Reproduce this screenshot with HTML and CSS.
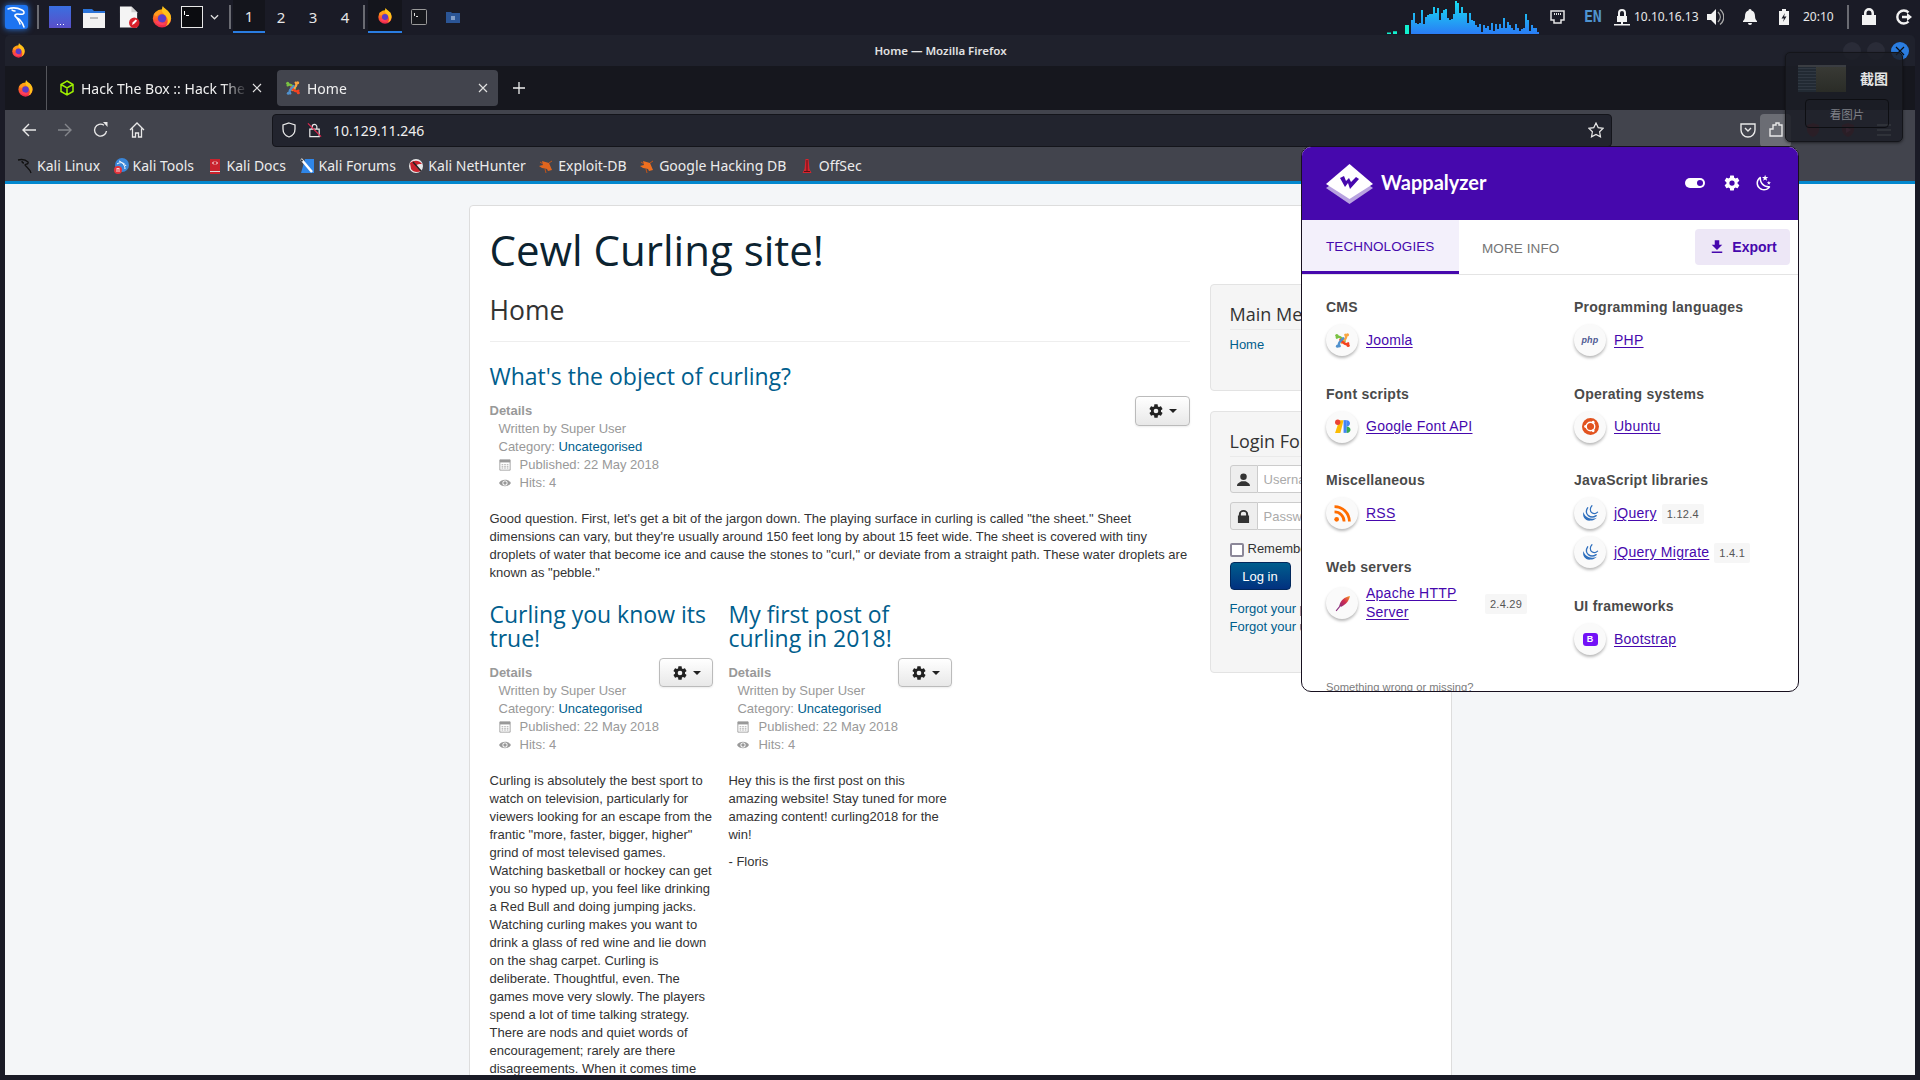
FILE: index.html
```html
<!DOCTYPE html>
<html lang="en">
<head>
<meta charset="utf-8">
<title>Home — Mozilla Firefox</title>
<link rel="stylesheet" href="styles.css">
</head>
<body>
<svg class="defs" aria-hidden="true">
  <defs>
    <linearGradient id="gFox" x1="0" y1="0" x2="0" y2="1"><stop offset="0" stop-color="#ffb400"/><stop offset=".55" stop-color="#ff5a2c"/><stop offset="1" stop-color="#e8234f"/></linearGradient>
    <linearGradient id="gGraph" gradientUnits="userSpaceOnUse" x1="0" y1="2" x2="0" y2="34"><stop offset="0" stop-color="#17dcf2"/><stop offset="1" stop-color="#2a7cf5"/></linearGradient>
    <symbol id="fox" viewBox="0 0 24 24">
      <circle cx="12" cy="13.500" r="10" fill="url(#gFox)"/>
      <path d="M13 0c1 3 6 4 8 9 2 5 0 11-5 13 3-3 3-8 0-11-1-2-4-3-4-6 0-1 0-4 1-5z" fill="#ffc21a"/>
      <circle cx="12" cy="13.500" r="4.600" fill="#5b3cc9"/>
      <path d="M3 9c2-3 6-4 9-3-1 3-4 2-5 5-2 0-3-1-4-2z" fill="#ff9a1f"/>
      <path d="M4 17c3 4 9 5 13 2-4 0-7-1-9-3z" fill="#ff3f5f"/>
    </symbol>
    <symbol id="gear" viewBox="0 0 24 24"><path d="M12 15.5A3.5 3.5 0 0 1 8.5 12 3.5 3.5 0 0 1 12 8.5a3.5 3.5 0 0 1 3.5 3.5 3.5 3.5 0 0 1-3.5 3.5m7.43-2.53c.04-.32.07-.64.07-.97 0-.33-.03-.66-.07-1l2.11-1.63c.19-.15.24-.42.12-.64l-2-3.46c-.12-.22-.39-.31-.61-.22l-2.49 1c-.52-.39-1.06-.73-1.69-.98l-.37-2.65A.506.506 0 0 0 14 2h-4c-.25 0-.46.18-.5.42l-.37 2.65c-.63.25-1.17.59-1.69.98l-2.49-1c-.22-.09-.49 0-.61.22l-2 3.46c-.13.22-.07.49.12.64L4.57 11c-.04.34-.07.67-.07 1 0 .33.03.65.07.97l-2.11 1.66c-.19.15-.25.42-.12.64l2 3.46c.12.22.39.3.61.22l2.49-1.01c.52.4 1.06.74 1.69.99l.37 2.65c.04.24.25.42.5.42h4c.25 0 .46-.18.5-.42l.37-2.65c.63-.26 1.17-.59 1.69-.99l2.49 1.01c.22.08.49 0 .61-.22l2-3.46c.12-.22.07-.49-.12-.64l-2.11-1.66Z" fill="currentColor"/></symbol>
    <symbol id="close" viewBox="0 0 12 12"><path d="M2 2l8 8M10 2l-8 8" stroke="currentColor" stroke-width="1.200" fill="none"/></symbol>
    <symbol id="joomla" viewBox="0 0 24 24" fill="none" stroke-width="3.400" stroke-linecap="round">
      <path d="M4 8c3-3 6 0 8 2l3 3" stroke="#7ac143"/>
      <path d="M16 4c3 3 0 6-2 8l-3 3" stroke="#f9a541"/>
      <path d="M20 16c-3 3-6 0-8-2l-3-3" stroke="#f44321"/>
      <path d="M8 20c-3-3 0-6 2-8l3-3" stroke="#5091cd"/>
      <circle cx="4" cy="5" r="2.300" fill="#7ac143" stroke="none"/>
      <circle cx="19" cy="4" r="2.300" fill="#f9a541" stroke="none"/>
      <circle cx="20" cy="19" r="2.300" fill="#f44321" stroke="none"/>
      <circle cx="5" cy="20" r="2.300" fill="#5091cd" stroke="none"/>
    </symbol>
    <symbol id="jq" viewBox="0 0 24 24" fill="none" stroke="#2f6fbd" stroke-linecap="round">
      <path d="M2 10c-2 7 3 13 10 12 3 0 6-1 9-4-5 2-10 2-14-1-3-2-4-4-5-7z" fill="#2f6fbd" stroke="none"/>
      <path d="M8 4c-3 4-2 9 1 11 4 3 8 2 11 0" stroke-width="1.900"/>
      <path d="M14 1c-3 3-3 8 0 10 3 2 6 1 8-1" stroke-width="1.700"/>
    </symbol>
    <symbol id="cal" viewBox="0 0 14 14"><path d="M1 1h12v12H1z" fill="none" stroke="#999" stroke-width="1"/><path d="M1 1h12v3H1z" fill="#999"/><path d="M3 6h2v1H3zM6 6h2v1H6zM9 6h2v1H9zM3 8h2v1H3zM6 8h2v1H6zM9 8h2v1H9zM3 10h2v1H3zM6 10h2v1H6zM9 10h2v1H9z" fill="#aaa"/></symbol>
    <symbol id="eye" viewBox="0 0 14 10"><path d="M0 5c3-5 11-5 14 0-3 5-11 5-14 0z" fill="#999"/><circle cx="7" cy="5" r="3" fill="#fff"/><circle cx="7" cy="5" r="2" fill="#999"/></symbol>
    <symbol id="caret" viewBox="0 0 8 4"><path d="M0 0h8L4 4z" fill="currentColor"/></symbol>
  </defs>
</svg>

<header class="panel">
  <div class="launchers">
    <svg class="kali-logo" viewBox="0 0 25 28"><rect x="1" y="2" width="23" height="24" rx="3" fill="#1d74f0"/><path d="M4 6c5-2 10-1 14 1 2 1 3 3 1 4-3 1-6-1-8 1-1 2 3 3 5 5 2 2 3 4 4 7M11 12c1 3 4 5 5 9M8 7c1 1 2 1 3 1" fill="none" stroke="#fff" stroke-width="1.500" stroke-linecap="round"/></svg>
    <span class="sep"></span>
    <svg class="launch launch-a" viewBox="0 0 22 22"><defs><linearGradient id="gDesk" x1="0" y1="0" x2="0" y2="1"><stop offset="0" stop-color="#3a6fe0"/><stop offset="1" stop-color="#5a4fc8"/></linearGradient></defs><rect width="22" height="22" fill="url(#gDesk)"/><path d="M8 18h1v1H8zM11 18h1v1h-1zM14 18h1v1h-1z" fill="#fff"/></svg>
    <svg class="launch launch-b" viewBox="0 0 22 22"><path d="M0 3h9l2 2h11v17H0z" fill="#2a73d8"/><path d="M0 7h22v15H0z" fill="#f2f2f2"/><rect x="7" y="11" width="8" height="2" fill="#bbb"/></svg>
    <svg class="launch launch-c" viewBox="0 0 22 22"><path d="M1 0h12l6 6v16H1z" fill="#f4f4f4"/><path d="M13 0l6 6h-6z" fill="#cfcfcf"/><circle cx="16" cy="17" r="5.500" fill="#d9202a"/><path d="M13.500 19.500l1-3 3-3 1.500 1.500-3 3z" fill="#fff"/></svg>
    <svg class="launch launch-d"><use href="#fox"/></svg>
    <svg class="launch launch-e" viewBox="0 0 22 22"><rect x=".5" y=".5" width="21" height="21" fill="#0b0c10" stroke="#e8e8e8"/><path d="M3 5h1v4H3zM5 9h3v1H5z" fill="#fff"/></svg>
    <svg class="chev" viewBox="0 0 10 6"><path d="M1 1l4 4 4-4" fill="none" stroke="#ddd" stroke-width="1.400"/></svg>
    <span class="sep sep-b"></span>
  </div>
  <nav class="spaces">
    <span class="space on">1</span><span class="space">2</span><span class="space">3</span><span class="space">4</span>
  </nav>
  <span class="sep sep-c"></span>
  <div class="tasks">
    <span class="task on"><svg class="task-ic"><use href="#fox"/></svg></span>
    <span class="task"><svg class="task-ic" viewBox="0 0 16 16"><rect x=".5" y=".5" width="15" height="15" rx="1" fill="#16171c" stroke="#9a9a9a"/><path d="M3 4h1v3H3zM5 7h2v1H5z" fill="#ddd"/></svg></span>
    <span class="task"><svg class="task-ic" viewBox="0 0 16 16"><path d="M1 3h5l1 1h8v10H1z" fill="#2b5595"/><rect x="6" y="7" width="4" height="4" fill="#a9bedd" opacity=".7"/></svg></span>
  </div>
  <div class="tray">
    <svg class="graph" viewBox="0 0 152 35"><path d="M0 34v-1.400h4V34zM6 34v-2.700h4V34zM18 34v-9h4v9z" fill="#12f0cf"/><path d="M24 34V20h2V13h2V23h2V24h2V23h2V10h2V24h2V17h2V15h2V14h2V14h2V7h2V13h2V8h2V20h2V13h2V10h2V9h2V18h2V20h2V19h2V14h2V1h2V3h2V13h2V7h2V13h2V13h2V23h2V13h2V20h2V21h2V25h2V27h2V24h2V32h2V25h2V28h2V26h2V30h2V23h2V31h2V24h2V29h2V24h2V28h2V18h2V28h2V22h2V25h2V28h2V30h2V24h2V28h2V31h2V29h2V28h2V14h2V20h2V31h2V25h2V28h2V28h2V32h2V34z" fill="url(#gGraph)"/></svg>
    <svg class="tray-net" viewBox="0 0 15 14"><path d="M1 1h13v9h-3v3H4v-3H1z" fill="none" stroke="#e4e4e4" stroke-width="1.500"/><path d="M4 3h1v2H4zM6 3h1v2H6zM8 3h1v2H8zM10 3h1v2h-1z" fill="#e4e4e4"/></svg>
    <span class="tray-en">EN</span>
    <svg class="tray-user" viewBox="0 0 16 18"><path d="M4 8V5a4 4 0 0 1 8 0v3h1v6H3V8zm2 0h4V5a2 2 0 0 0-4 0z" fill="#f2f2f2"/><path d="M7 14h2v2h7v1.500H0V16h7z" fill="#f2f2f2"/></svg>
    <span class="tray-text tray-ip">10.10.16.13</span>
    <svg class="tray-vol" viewBox="0 0 17 18"><path d="M0 6h4l5-5v16l-5-5H0z" fill="#f2f2f2"/><path d="M11 4c3 3 3 7 0 10M13 1.500c5 4 5 11 0 15" fill="none" stroke="#aaa" stroke-width="1.300"/></svg>
    <svg class="tray-bell" viewBox="0 0 14 16"><path d="M7 0c1 0 1.500.8 1.500 1.500 2.500.7 3.500 3 3.500 5.500 0 3 1 4 2 5v1H0v-1c1-1 2-2 2-5 0-2.500 1-4.800 3.500-5.500C5.500.8 6 0 7 0zM5 14h4a2 2 0 0 1-4 0z" fill="#f2f2f2"/></svg>
    <svg class="tray-bat" viewBox="0 0 10 16"><path d="M3 0h4v2h3v14H0V2h3z" fill="#f2f2f2"/><path d="M6 4L2.500 9.500H5L4 13l3.500-5.500H5z" fill="#1a1b26"/></svg>
    <span class="tray-text tray-time">20:10</span>
    <span class="sep sep-d"></span>
    <svg class="tray-lock" viewBox="0 0 14 17"><path d="M2 7V5a5 5 0 0 1 10 0v2h2v10H0V7zm2.500 0h5V5a2.500 2.500 0 0 0-5 0z" fill="#f2f2f2"/></svg>
    <svg class="tray-out" viewBox="0 0 16 16"><path d="M12.500 3.500A6.500 6.500 0 1 0 12.500 12.500" fill="none" stroke="#f2f2f2" stroke-width="2.400"/><path d="M6 6.800h5V4l5 4-5 4V9.200H6z" fill="#f2f2f2"/></svg>
  </div>
</header>

<div class="window">
  <div class="titlebar">
    <svg class="title-ic"><use href="#fox"/></svg>
    <span class="title-text">Home — Mozilla Firefox</span>
    <div class="win-btns"><span class="win-btn"></span><span class="win-btn"></span><span class="win-btn win-close"><svg class="win-x"><use href="#close"/></svg></span></div>
  </div>

  <div class="tabbar">
    <span class="ff-slot"><svg class="ff-menu"><use href="#fox"/></svg></span>
    <div class="tab">
      <svg class="tab-ic" viewBox="0 0 16 16"><path d="M8 1l6 3.500v7L8 15l-6-3.500v-7z M2 4.500L8 8l6-3.500M8 8v7" fill="none" stroke="#9fef00" stroke-width="1.500"/></svg>
      <span class="tab-label">Hack The Box :: Hack The Box</span>
      <svg class="tab-x"><use href="#close"/></svg>
    </div>
    <div class="tab tab-on">
      <svg class="tab-ic"><use href="#joomla"/></svg>
      <span class="tab-label">Home</span>
      <svg class="tab-x"><use href="#close"/></svg>
    </div>
    <svg class="tab-new" viewBox="0 0 12 12"><path d="M6 0v12M0 6h12" stroke="#eee" stroke-width="1.300"/></svg>
  </div>

  <div class="navbar">
    <span class="nav-slot"><svg class="nav-ic" viewBox="0 0 16 16"><path d="M15 8H2M8 2L2 8l6 6" fill="none" stroke="#e8e8e8" stroke-width="1.400"/></svg></span>
    <span class="nav-slot"><svg class="nav-ic" viewBox="0 0 16 16"><path d="M1 8h13M8 2l6 6-6 6" fill="none" stroke="#84868c" stroke-width="1.400"/></svg></span>
    <span class="nav-slot"><svg class="nav-ic" viewBox="0 0 16 16"><path d="M13.500 9A6 6 0 1 1 11 3.200" fill="none" stroke="#e8e8e8" stroke-width="1.400"/><path d="M10 0h4.500v5z" fill="#e8e8e8"/></svg></span>
    <span class="nav-slot"><svg class="nav-ic" viewBox="0 0 16 16"><path d="M1 8l7-7 7 7M3.500 6.500V15h3v-4h3v4h3V6.500" fill="none" stroke="#e8e8e8" stroke-width="1.300"/></svg></span>
    <div class="urlbar">
      <svg class="url-shield" viewBox="0 0 16 16"><path d="M8 1l6 2v4c0 4-3 7-6 8-3-1-6-4-6-8V3z" fill="none" stroke="#e8e8e8" stroke-width="1.300"/></svg>
      <svg class="url-lock" viewBox="0 0 16 16"><path d="M3 7h10v8H3zM5.500 7V4.500a2.500 2.500 0 0 1 5 0V7" fill="none" stroke="#e8e8e8" stroke-width="1.300"/><path d="M1 1l14 14" stroke="#e22850" stroke-width="1.300"/></svg>
      <span class="url-text">10.129.11.246</span>
      <svg class="url-star" viewBox="0 0 16 16"><path d="M8 1l2.200 4.600 5 .7-3.600 3.500.9 5L8 12.400l-4.500 2.400.9-5L.8 6.300l5-.7z" fill="none" stroke="#e8e8e8" stroke-width="1.200"/></svg>
    </div>
    <div class="nav-right">
      <svg class="nav-ic" viewBox="0 0 16 16"><path d="M1 2h14v6a7 7 0 0 1-14 0z" fill="none" stroke="#e8e8e8" stroke-width="1.400"/><path d="M5 6l3 3 3-3" fill="none" stroke="#e8e8e8" stroke-width="1.400"/></svg>
      <span class="puzzle"><svg class="nav-ic" viewBox="0 0 16 16"><path d="M2 7h3V3h3v-2h3v2h3v11H2z" fill="none" stroke="#e8e8e8" stroke-width="1.400"/></svg></span>
      <svg class="nav-ic ext-a" viewBox="0 0 16 16"><path d="M8 1l6 2v5c0 3-3 6-6 7-3-1-6-4-6-7V3z" fill="#7d2027"/></svg>
      <svg class="nav-ic ext-b" viewBox="0 0 16 16"><path d="M8 1l6 2v5c0 3-3 6-6 7-3-1-6-4-6-7V3z" fill="#7d2027"/><path d="M6 5l5 3-5 3z" fill="#b46"/></svg>
      <svg class="nav-ic ext-c" viewBox="0 0 16 16"><path d="M1 3h14M1 8h14M1 13h14" stroke="#c8c8c8" stroke-width="1.400"/></svg>
    </div>
  </div>

  <div class="bookmarks">
    <span class="bm"><svg class="bm-ic" viewBox="0 0 16 16"><path d="M1 2c4-1 8 0 10 2 1 2-2 2-3 3 1 2 5 4 6 8M5 3c0 1 1 2 2 2" fill="none" stroke="#111" stroke-width="1.300"/></svg>Kali Linux</span>
    <span class="bm"><svg class="bm-ic" viewBox="0 0 16 16"><circle cx="9" cy="7" r="7" fill="#3a86d8"/><path d="M4 6c3-2 7-2 9 2M6 3c3 1 6 4 6 8" stroke="#fff" fill="none"/><circle cx="5" cy="12" r="4" fill="#e5333a"/><path d="M3.500 10.500h3M4 11v3M6 11v3" stroke="#fff" stroke-width=".8"/></svg>Kali Tools</span>
    <span class="bm"><svg class="bm-ic" viewBox="0 0 16 16"><path d="M3 1h10v15H3z" fill="#c9232d"/><path d="M3 13h10v1H3z" fill="#ddd"/><path d="M5.500 5L7 3.500M5.500 5L7 6.500M10.500 5L9 3.500M10.500 5L9 6.500" stroke="#fff"/></svg>Kali Docs</span>
    <span class="bm"><svg class="bm-ic" viewBox="0 0 16 16"><path d="M6 1h9v14H2z" fill="#2f86e8"/><path d="M2 1l11 13" stroke="#fff" stroke-width="2.500"/><path d="M1 1l3 1-1 2z" fill="#222"/></svg>Kali Forums</span>
    <span class="bm"><svg class="bm-ic" viewBox="0 0 16 16"><circle cx="8" cy="8" r="7" fill="#e9e9e9"/><path d="M2 5c4-3 9-3 12 1-3 0-5 0-6 2 1 2 3 3 5 5-4 2-8 1-10-2z" fill="#c9232d"/><path d="M5 4l8 9" stroke="#222" stroke-width="1.500"/></svg>Kali NetHunter</span>
    <span class="bm"><svg class="bm-ic" viewBox="0 0 16 16"><path d="M4 3l7 2 3 7-4 1-1-2-5-1-3-2 4-1z" fill="#e0651e"/><path d="M2 4l3 2M7 11l1 4M11 5l3-2" stroke="#c2541a"/></svg>Exploit-DB</span>
    <span class="bm"><svg class="bm-ic" viewBox="0 0 16 16"><path d="M4 3l7 2 3 7-4 1-1-2-5-1-3-2 4-1z" fill="#ef6f1f"/><path d="M2 4l3 2M7 11l1 4M11 5l3-2" stroke="#c2541a"/></svg>Google Hacking DB</span>
    <span class="bm"><svg class="bm-ic" viewBox="0 0 16 16"><path d="M6.500 1h3l1 10 2 4h-9l2-4z" fill="#d8232d"/><path d="M7.500 2h1v12h-1zM5 13h6v1H5z" fill="#5e0f14"/></svg>OffSec</span>
  </div>

  <main class="page">
    <div class="site">
      <div class="brand">Cewl Curling site!</div>
      <div class="columns">
        <div class="content">
          <h1 class="page-title">Home</h1>
          <article class="lead">
            <h2 class="post-title">What's the object of curling?</h2>
            <button class="gear-btn"><svg class="gear-ic"><use href="#gear"/></svg><svg class="gear-caret"><use href="#caret"/></svg></button>
            <dl class="info">
              <dt>Details</dt>
              <dd>Written by Super User</dd>
              <dd>Category: <a href="#">Uncategorised</a></dd>
              <dd class="with-ic"><svg class="info-ic"><use href="#cal"/></svg>Published: 22 May 2018</dd>
              <dd class="with-ic"><svg class="info-ic"><use href="#eye"/></svg>Hits: 4</dd>
            </dl>
            <p class="body-text">Good question. First, let's get a bit of the jargon down. The playing surface in curling is called "the sheet." Sheet dimensions can vary, but they're usually around 150 feet long by about 15 feet wide. The sheet is covered with tiny droplets of water that become ice and cause the stones to "curl," or deviate from a straight path. These water droplets are known as "pebble."</p>
          </article>
          <div class="row">
            <article class="item">
              <h2 class="post-title">Curling you know its true!</h2>
              <button class="gear-btn"><svg class="gear-ic"><use href="#gear"/></svg><svg class="gear-caret"><use href="#caret"/></svg></button>
              <dl class="info">
                <dt>Details</dt>
                <dd>Written by Super User</dd>
                <dd>Category: <a href="#">Uncategorised</a></dd>
                <dd class="with-ic"><svg class="info-ic"><use href="#cal"/></svg>Published: 22 May 2018</dd>
                <dd class="with-ic"><svg class="info-ic"><use href="#eye"/></svg>Hits: 4</dd>
              </dl>
              <p class="body-text">Curling is absolutely the best sport to watch on television, particularly for viewers looking for an escape from the frantic "more, faster, bigger, higher" grind of most televised games. Watching basketball or hockey can get you so hyped up, you feel like drinking a Red Bull and doing jumping jacks. Watching curling makes you want to drink a glass of red wine and lie down on the shag carpet. Curling is deliberate. Thoughtful, even. The games move very slowly. The players spend a lot of time talking strategy. There are nods and quiet words of encouragement; rarely are there disagreements. When it comes time</p>
            </article>
            <article class="item">
              <h2 class="post-title">My first post of curling in 2018!</h2>
              <button class="gear-btn"><svg class="gear-ic"><use href="#gear"/></svg><svg class="gear-caret"><use href="#caret"/></svg></button>
              <dl class="info">
                <dt>Details</dt>
                <dd>Written by Super User</dd>
                <dd>Category: <a href="#">Uncategorised</a></dd>
                <dd class="with-ic"><svg class="info-ic"><use href="#cal"/></svg>Published: 22 May 2018</dd>
                <dd class="with-ic"><svg class="info-ic"><use href="#eye"/></svg>Hits: 4</dd>
              </dl>
              <p class="body-text">Hey this is the first post on this amazing website! Stay tuned for more amazing content! curling2018 for the win!</p>
              <p class="body-text sign">- Floris</p>
            </article>
          </div>
        </div>
        <aside class="sidebar">
          <section class="well well-menu">
            <h3 class="well-title">Main Menu</h3>
            <a class="well-link" href="#">Home</a>
          </section>
          <section class="well well-login">
            <h3 class="well-title">Login Form</h3>
            <div class="input-group"><span class="addon"><svg class="addon-ic" viewBox="0 0 14 14"><circle cx="7" cy="4" r="3.500" fill="#333"/><path d="M0 14c0-3 3-4 5-5h4c2 1 5 2 5 5z" fill="#333"/></svg></span><input class="field" placeholder="Username"></div>
            <div class="input-group"><span class="addon"><svg class="addon-ic" viewBox="0 0 14 14"><path d="M2 6V4.500a5 4.500 0 0 1 10 0V6h1v8H1V6zm2.200 0h5.600V4.500a2.800 2.500 0 0 0-5.600 0z" fill="#333"/></svg></span><input class="field" placeholder="Password"></div>
            <label class="remember"><input class="check" type="checkbox">Remember Me</label>
            <button class="login-btn">Log in</button>
            <a class="forgot" href="#">Forgot your password?</a>
            <a class="forgot" href="#">Forgot your username?</a>
          </section>
        </aside>
      </div>
    </div>
  </main>
</div>

<section class="wapp">
  <div class="wapp-head">
    <svg class="wapp-logo" viewBox="0 0 47 40"><path d="M0 24L23.500 8 47 24 23.500 40z" fill="#b8a3e0"/><path d="M0 20L23.500 0 47 20 23.500 35z" fill="#fff"/><path d="M14 14l5 9 3-4 2 6 9-10-3-2-5 5-2-4-3 3-2-5z" fill="#4608ad"/></svg>
    <span class="wapp-name">Wappalyzer</span>
    <div class="wapp-actions">
      <svg class="wapp-toggle" viewBox="0 0 20 10"><rect width="20" height="10" rx="5" fill="#fff"/><circle cx="15" cy="5" r="3" fill="#4608ad"/></svg>
      <svg class="wapp-ic"><use href="#gear"/></svg>
      <svg class="wapp-ic wapp-moon" viewBox="0 0 24 24"><path fill="currentColor" d="M17.750,4.090L15.220,6.030L16.130,9.090L13.500,7.280L10.870,9.090L11.780,6.030L9.250,4.090L12.440,4L13.500,1L14.560,4L17.750,4.090M21.250,11L19.610,12.250L20.200,14.230L18.500,13.060L16.800,14.230L17.390,12.250L15.750,11L17.810,10.950L18.500,9L19.190,10.950L21.250,11M18.970,15.950C19.800,15.870 20.690,17.050 20.160,17.800C19.840,18.250 19.500,18.670 19.080,19.070C15.170,23 8.840,23 4.940,19.070C1.030,15.170 1.030,8.830 4.940,4.930C5.340,4.530 5.760,4.170 6.210,3.850C6.960,3.320 8.140,4.210 8.060,5.040C7.790,7.900 8.750,10.870 10.950,13.060C13.140,15.260 16.100,16.220 18.970,15.950M17.330,17.970C14.500,17.810 11.700,16.640 9.530,14.500C7.360,12.310 6.200,9.500 6.040,6.680C3.230,9.820 3.340,14.640 6.350,17.660C9.370,20.670 14.190,20.780 17.330,17.970Z"/></svg>
    </div>
  </div>
  <div class="wapp-tabs">
    <span class="wapp-tab wapp-tab-on">Technologies</span>
    <span class="wapp-tab">More info</span>
    <span class="wapp-export"><svg class="export-ic" viewBox="0 0 24 24"><path d="M5,20H19V18H5M19,9H15V3H9V9H5L12,16L19,9Z" fill="currentColor"/></svg>Export</span>
  </div>
  <div class="wapp-body">
    <div class="wapp-col">
      <div class="cat">
        <h4 class="cat-title">CMS</h4>
        <div class="tech"><span class="tech-ic"><svg class="tech-svg"><use href="#joomla"/></svg></span><a class="tech-link" href="#">Joomla</a></div>
      </div>
      <div class="cat">
        <h4 class="cat-title">Font scripts</h4>
        <div class="tech"><span class="tech-ic"><svg class="tech-svg" viewBox="0 0 16 16"><path d="M5 2l4 0-3 12H1z" fill="#fbbc04"/><circle cx="3.500" cy="4" r="2.500" fill="#ea4335"/><path d="M9 2h3v12H9z" fill="#4285f4"/><path d="M12 2c2 0 3 1.500 3 3s-1 3-3 3z" fill="#4285f4"/><path d="M12 8c2 0 3.500 1.500 3.500 3S14 14 12 14z" fill="#34a853"/></svg></span><a class="tech-link" href="#">Google Font API</a></div>
      </div>
      <div class="cat">
        <h4 class="cat-title">Miscellaneous</h4>
        <div class="tech"><span class="tech-ic"><svg class="tech-svg" viewBox="0 0 16 16"><circle cx="2.500" cy="13.500" r="2.200" fill="#ff6d00"/><path d="M.5 6.500a9 9 0 0 1 9 9M.5 1.500a14 14 0 0 1 14 14" fill="none" stroke="#ff6d00" stroke-width="2.600"/></svg></span><a class="tech-link" href="#">RSS</a></div>
      </div>
      <div class="cat">
        <h4 class="cat-title">Web servers</h4>
        <div class="tech"><span class="tech-ic"><svg class="tech-svg" viewBox="0 0 16 16"><defs><linearGradient id="gFeather" x1="1" y1="0" x2="0" y2="1"><stop offset="0" stop-color="#f69923"/><stop offset=".5" stop-color="#d22d4f"/><stop offset="1" stop-color="#8a2a7c"/></linearGradient></defs><path d="M15 1c-5 1-9 4-10 9l2 1c4-2 7-5 8-10z" fill="url(#gFeather)"/><path d="M6 10l-4 5" stroke="#8a2a7c" fill="none"/></svg></span><a class="tech-link tech-wrap" href="#">Apache HTTP Server</a><span class="chip">2.4.29</span></div>
      </div>
    </div>
    <div class="wapp-col">
      <div class="cat">
        <h4 class="cat-title">Programming languages</h4>
        <div class="tech"><span class="tech-ic"><span class="php">php</span></span><a class="tech-link" href="#">PHP</a></div>
      </div>
      <div class="cat">
        <h4 class="cat-title">Operating systems</h4>
        <div class="tech"><span class="tech-ic"><svg class="tech-svg" viewBox="0 0 16 16"><circle cx="8" cy="8" r="8" fill="#e2531f"/><circle cx="8" cy="8" r="4" fill="none" stroke="#fff" stroke-width="1.300"/><circle cx="3.300" cy="8" r="1.300" fill="#fff"/><circle cx="10.500" cy="4" r="1.300" fill="#fff"/><circle cx="10.500" cy="12" r="1.300" fill="#fff"/></svg></span><a class="tech-link" href="#">Ubuntu</a></div>
      </div>
      <div class="cat">
        <h4 class="cat-title">JavaScript libraries</h4>
        <div class="tech"><span class="tech-ic"><svg class="tech-svg"><use href="#jq"/></svg></span><a class="tech-link" href="#">jQuery</a><span class="chip">1.12.4</span></div>
        <div class="tech"><span class="tech-ic"><svg class="tech-svg"><use href="#jq"/></svg></span><a class="tech-link" href="#">jQuery Migrate</a><span class="chip">1.4.1</span></div>
      </div>
      <div class="cat">
        <h4 class="cat-title">UI frameworks</h4>
        <div class="tech"><span class="tech-ic"><span class="bs">B</span></span><a class="tech-link" href="#">Bootstrap</a></div>
      </div>
    </div>
  </div>
  <div class="wapp-foot">Something wrong or missing?</div>
</section>

<aside class="shot-tip">
  <div class="tip-top"><span class="tip-thumb"></span><span class="tip-title">截图</span></div>
  <span class="tip-btn">看图片</span>
</aside>
</body>
</html>
```

FILE: styles.css
```css
* { box-sizing: border-box; }
html, body { height: 100%; }
body {
  margin: 0;
  width: 1920px;
  height: 1080px;
  overflow: hidden;
  display: flex;
  flex-direction: column;
  background: #1a1b26;
  font-family: "Liberation Sans", Arial, sans-serif;
  font-size: 13px;
  color: #333;
  position: relative;
}
svg { display: block; flex: none; }
.defs { width: 0; height: 0; overflow: hidden; position: absolute; }

/* ---------- desktop panel ---------- */
.panel { height: 35px; flex: none; display: flex; align-items: stretch; background: #1a1b26; color: #f0f0f0; font-family: "Noto Sans", sans-serif; padding-bottom: 2px; }
.launchers { display: flex; align-items: center; padding-left: 4px; }
.kali-logo { width: 25px; height: 28px; filter: drop-shadow(0 0 3px #2b7df0); }
.sep { width: 2px; height: 24px; background: #6a6b72; flex: none; align-self: center; }
.launchers > .sep:nth-of-type(1) { margin-left: 8px; }
.launch { width: 22px; height: 22px; }
.launch-a { margin-left: 10px; }
.launch-b { margin-left: 12px; }
.launch-c { margin-left: 14px; width: 21px; }
.launch-d { margin-left: 11px; width: 22px; }
.launch-e { margin-left: 8px; }
.chev { width: 9px; height: 6px; margin-left: 7px; }
.launchers > .sep-b { margin-left: 10px; }
.spaces { display: flex; margin-left: 2px; }
.space { width: 32px; display: flex; align-items: center; justify-content: center; font-size: 15px; color: #e6e6e6; }
.space.on { background: #14151c; border-bottom: 2px solid #2a7de1; }
.sep-c { margin-left: 2px; }
.tasks { display: flex; margin-left: 3px; }
.task { width: 34px; display: flex; align-items: center; justify-content: center; }
.task.on { background: #14151c; border-bottom: 2px solid #2a7de1; }
.task-ic { width: 16px; height: 16px; }
.tray { margin-left: auto; display: flex; align-items: center; padding-right: 8px; }
.graph { width: 152px; height: 35px; margin: 0 0 -2px; align-self: flex-start; }
.tray-net { width: 15px; height: 14px; margin-left: 11px; }
.tray-en { margin-left: 19px; width: 18px; font: bold 15px "DejaVu Sans Mono", monospace; color: #4f93cf; letter-spacing: -.3px; }
.tray-user { width: 16px; height: 18px; margin-left: 12px; }
.tray-text { font-size: 12px; color: #e8e8e8; }
.tray-ip { margin-left: 4px; width: 68px; white-space: nowrap; }
.tray-vol { width: 17px; height: 18px; margin-left: 5px; }
.tray-bell { width: 14px; height: 16px; margin-left: 19px; }
.tray-bat { width: 10px; height: 16px; margin-left: 22px; }
.tray-time { margin-left: 14px; width: 31px; }
.sep-d { margin-left: 13px; }
.tray-lock { width: 14px; height: 17px; margin-left: 13px; }
.tray-out { width: 16px; height: 16px; margin-left: 20px; }

/* ---------- firefox window ---------- */
.window { flex: 1; min-height: 0; margin: 0 5px 5px; display: flex; flex-direction: column; border-radius: 5px 5px 0 0; overflow: hidden; }
.titlebar { height: 31px; flex: none; display: flex; align-items: center; background: #1f212c; padding: 0 6px 0 6px; }
.title-ic { width: 15px; height: 15px; }
.title-text { flex: 1; text-align: center; font: 600 11.500px "Noto Sans", sans-serif; color: #e2e2e2; padding: 0 16px 0 28px; }
.win-btns { display: flex; gap: 6px; }
.win-btn { width: 18px; height: 18px; border-radius: 50%; background: #2a2c38; display: flex; align-items: center; justify-content: center; }
.win-close { background: #2a7de1; }
.win-x { width: 12px; height: 12px; color: #0c0c0c; }

.tabbar { height: 44px; flex: none; display: flex; align-items: center; background: #16171e; font: 14px "Noto Sans", sans-serif; color: #f0f0f0; }
.ff-slot { width: 42px; height: 100%; display: flex; align-items: center; justify-content: center; border-right: 1px solid #55565c; }
.ff-menu { width: 17px; height: 17px; }
.tab { width: 221px; height: 36px; flex: none; display: flex; align-items: center; padding: 0 8px; border-radius: 4px; margin-left: 4px; }
.tab-on { background: #42444d; margin-left: 5px; }
.tab-ic { width: 16px; height: 16px; }
.tab-label { flex: 1; min-width: 0; margin-left: 6px; white-space: nowrap; overflow: hidden; -webkit-mask-image: linear-gradient(90deg, #000 85%, transparent); mask-image: linear-gradient(90deg, #000 85%, transparent); }
.tab-x { width: 12px; height: 12px; color: #e0e0e0; margin-left: 3px; margin-right: 1px; }
.tab-new { width: 12px; height: 12px; margin-left: 15px; }

.navbar { height: 37px; flex: none; display: flex; align-items: center; background: #42444d; padding: 3px 0 0 6px; }
.nav-slot { width: 36px; display: flex; justify-content: center; }
.nav-ic { width: 16px; height: 16px; }
.urlbar { width: 1340px; height: 33px; margin-left: 117px; display: flex; align-items: center; background: #22242e; border: 1px solid #14151b; border-radius: 4px; padding: 0 7px 0 8px; font: 14px "Noto Sans", sans-serif; color: #efefef; }
.url-shield { width: 16px; height: 16px; }
.url-lock { width: 15px; height: 16px; margin-left: 10px; }
.url-text { margin-left: 11px; flex: 1; }
.url-star { width: 16px; height: 16px; }
.nav-right { flex: 1; display: flex; align-items: center; padding-left: 128px; }
.puzzle { width: 31px; height: 33px; margin-left: 4px; background: #6b6d74; border-radius: 4px; display: flex; align-items: center; justify-content: center; }
.ext-a { margin-left: 14px; }
.ext-b { margin-left: 19px; }
.ext-c { margin-left: 20px; }

.bookmarks { height: 34px; flex: none; display: flex; align-items: center; background: #42444d; padding: 3px 0 0 12px; font: 14px "Noto Sans", sans-serif; color: #ececec; }
.bm { display: flex; align-items: center; gap: 4px; margin-right: 12.500px; white-space: nowrap; }
.bm-ic { width: 16px; height: 16px; }

/* ---------- joomla page ---------- */
.page { flex: 1; min-height: 0; overflow: hidden; background: #f4f6f8; border-top: 3px solid #0288cf; padding-top: 21px; }
.site { width: 983px; margin: 0 auto; background: #fff; border: 1px solid #ddd; border-radius: 4px 4px 0 0; padding: 20px 20px 0; }
.brand { font: 42px/48px "Open Sans", sans-serif; color: #0c2330; margin-bottom: 10px; }
.columns { display: flex; gap: 20px; }
.content { width: 700px; flex: none; }
.page-title { margin: 11px 0 0; padding-bottom: 16px; border-bottom: 1px solid #eee; font: 400 26.500px/30px "Open Sans", sans-serif; color: #333; }
.post-title { margin: 0; font: 400 23px/24px "Open Sans", sans-serif; color: #005e8d; }
.lead { padding-top: 22px; }
.gear-btn { float: right; width: 54px; height: 29px; margin: 8px 0 0 8px; display: flex; align-items: center; justify-content: center; gap: 5px; padding: 0; color: #222; background: linear-gradient(#fff, #e8e8e8); border: 1px solid #bbb; border-radius: 4px; box-shadow: 0 1px 2px rgba(0,0,0,.08); }
.lead > .gear-btn { height: 30px; width: 55px; }
.gear-ic { width: 16px; height: 16px; }
.gear-caret { width: 8px; height: 4px; }
.info { margin: 14px 0 0; line-height: 18px; color: #999; }
.info dt { font-weight: 700; }
.info dd { margin: 0 0 0 9px; }
.info a { color: #005e8d; text-decoration: none; }
.with-ic { display: flex; align-items: center; gap: 9px; }
.info-ic { width: 12px; height: 12px; }
.body-text { margin: 18px 0 0; line-height: 18px; color: #333; }
.row { display: flex; gap: 15.400px; margin-top: 20px; }
.item { width: 223.600px; flex: none; }
.item .sign { margin-top: 9px; }

.sidebar { width: 221px; flex: none; }
.well { background: #f5f5f5; border: 1px solid #e3e3e3; border-radius: 4px; padding: 19px; margin-bottom: 20px; }
.well-menu { height: 107px; }
.well-login { height: 262px; }
.well-title { margin: 0 0 6px; padding-bottom: 5px; border-bottom: 1px solid #eaeaea; font: 400 18px/20px "Open Sans", sans-serif; color: #333; white-space: nowrap; }
.well-link { color: #005e8d; text-decoration: none; line-height: 18px; display: block; }
.input-group { display: flex; height: 28px; margin-top: 9px; }
.well-title + .input-group { margin-top: 8px; }
.addon { width: 28px; flex: none; display: flex; align-items: center; justify-content: center; background: #eee; border: 1px solid #ccc; border-radius: 3px 0 0 3px; }
.addon-ic { width: 13px; height: 13px; }
.field { flex: 1; min-width: 0; border: 1px solid #ccc; border-left: 0; background: #fff; padding: 0 6px; font: 13px "Liberation Sans", sans-serif; color: #555; }
.field::placeholder { color: #aaa; }
.remember { display: flex; align-items: center; gap: 4px; margin-top: 11px; height: 16px; line-height: 16px; white-space: nowrap; }
.check { appearance: none; width: 14px; height: 14px; margin: 2px 0 0; border: 2px solid #8b8798; border-radius: 2px; background: #fff; }
.login-btn { display: block; width: 61px; height: 28px; margin: 5px 0 10px; background: linear-gradient(#005e8d, #02317f); border: 1px solid #02285c; border-radius: 4px; color: #fff; font: 13px "Liberation Sans", sans-serif; padding: 0; }
.forgot { display: block; color: #005e8d; text-decoration: none; line-height: 18px; white-space: nowrap; }

/* ---------- wappalyzer popup ---------- */
.wapp { position: absolute; left: 1301px; top: 146px; width: 498px; height: 546px; overflow: hidden; background: #fff; border: 1px solid #17101f; border-radius: 10px; font-family: "Liberation Sans", sans-serif; letter-spacing: .25px; }
.wapp-head { height: 73px; display: flex; align-items: center; background: #4608ad; padding: 1px 25px 0 24px; color: #fff; }
.wapp-logo { width: 47px; height: 40px; }
.wapp-name { margin: 0 0 5px 8px; font: 700 20px "Lato", sans-serif; letter-spacing: 0; }
.wapp-actions { margin-left: auto; display: flex; align-items: center; margin-bottom: 2px; }
.wapp-toggle { width: 20px; height: 10px; }
.wapp-ic { width: 18px; height: 18px; margin-left: 18px; color: #fff; }
.wapp-moon { margin-left: 14px; }
.wapp-tabs { height: 55px; display: flex; align-items: stretch; border-bottom: 1px solid #e4e4e4; }
.wapp-tab { display: flex; align-items: center; padding: 2px 23px 0; text-transform: uppercase; font-size: 13.500px; letter-spacing: .1px; color: #757575; }
.wapp-tab-on { color: #4608ad; background: #f3f0fb; border-bottom: 3px solid #4608ad; width: 157px; padding-left: 24px; }
.wapp-export { margin: 9px 8px 9px auto; width: 95px; display: flex; align-items: center; justify-content: center; gap: 6px; background: #ede7f6; border-radius: 4px; color: #4608ad; font-size: 14px; font-weight: 700; letter-spacing: 0; }
.export-ic { width: 18px; height: 18px; }
.wapp-body { display: flex; padding: 22px 0 0 24px; }
.wapp-col { width: 248px; flex: none; }
.cat { margin-bottom: 27.700px; }
.cat-title { margin: 0 0 7px; font-size: 14px; line-height: 20px; font-weight: 700; color: #4a4a4a; letter-spacing: .25px; }
.tech { display: flex; align-items: center; min-height: 32px; margin-top: 7px; }
.tech-ic { width: 32px; height: 32px; flex: none; display: flex; align-items: center; justify-content: center; border-radius: 50%; background: #fafafa; box-shadow: 0 2px 3px rgba(0,0,0,.28); margin-right: 8px; }
.tech-svg { width: 17px; height: 17px; }
.tech-link { font-size: 14px; line-height: 19px; color: #4608ad; text-decoration: underline; text-underline-offset: 2px; }
.tech-wrap { width: 114px; flex: none; }
.chip { margin: 2px 0 0 5px; height: 20px; padding: 0 5px; display: flex; align-items: center; background: #f6f6f6; border-radius: 2px; font-size: 11px; color: #555; }
.php { font: italic 700 9px "Liberation Sans", sans-serif; color: #4f5b93; }
.bs { width: 15px; height: 13px; display: flex; align-items: center; justify-content: center; background: #7311f7; border-radius: 3px; color: #fff; font: 700 9px "Liberation Sans", sans-serif; }
.wapp-foot { padding-left: 24px; margin-top: -3px; font-size: 11.200px; line-height: 14px; letter-spacing: 0; color: #7d7d7d; }

/* ---------- floating screenshot tooltip ---------- */
.shot-tip { position: absolute; left: 1785px; top: 52px; width: 118px; height: 90px; background: rgba(28,30,38,.86); border: 1px solid #14151a; border-radius: 5px; box-shadow: 0 1px 3px rgba(0,0,0,.5); padding: 11px 13px 0 12px; }
.tip-top { display: flex; align-items: center; height: 28px; }
.tip-thumb { width: 48px; height: 27px; flex: none; background: linear-gradient(#3a3d42 0 2px, transparent 2px), repeating-linear-gradient(#303842 0 1px, #222a33 1px 3px) left / 18px 100% no-repeat, linear-gradient(#3a3b36, #2a2c27); }
.tip-title { margin-left: 14px; font: 700 14px "Noto Sans CJK SC", sans-serif; color: #e4e4e4; }
.tip-btn { display: flex; align-items: center; justify-content: center; width: 84px; height: 29px; margin: 7px 0 0 7px; border: 1px solid #0d0e12; border-radius: 4px; font: 11.500px "Noto Sans CJK SC", sans-serif; color: #7f8087; }
```
